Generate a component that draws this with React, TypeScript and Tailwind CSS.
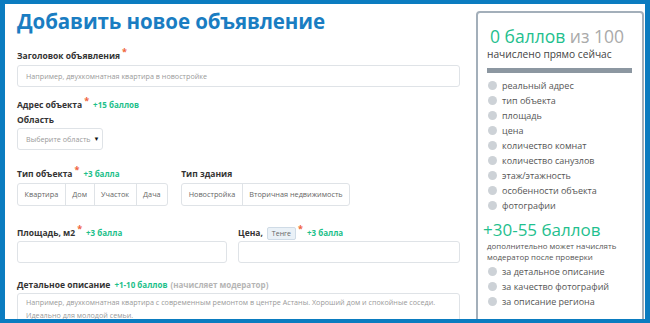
import React from "react";

const FONT = { fontFamily: '"Open Sans", "Noto Sans", sans-serif' };

const Star = () => <span className="text-[#f0643c] text-[9px] leading-none relative -top-[4px] ml-[2px]">*</span>;

const Points = ({ children }: { children: React.ReactNode }) => (
  <span className="text-[#1dbf8a] text-[8px] font-bold ml-[4px]">{children}</span>
);

const Label = ({ children, className = "" }: { children: React.ReactNode; className?: string }) => (
  <div className={`flex items-baseline text-[8.5px] font-bold text-[#333] leading-[14px] h-[14px] whitespace-nowrap ${className}`}>
    {children}
  </div>
);

const Input = ({ placeholder, className = "" }: { placeholder?: string; className?: string }) => (
  <div className={`h-[22px] border border-[#dfe3e7] rounded-[3px] flex items-center px-[8px] text-[7.2px] text-[#9a9a9a] whitespace-nowrap ${className}`}>
    {placeholder}
  </div>
);

const Group = ({ items }: { items: string[] }) => (
  <div className="flex h-[23px] mt-[2px] border border-[#dfe3e7] rounded-[3px] text-[7.3px] text-[#666] whitespace-nowrap">
    {items.map((t, i) => (
      <div key={t} className={`flex items-center px-[6.5px] ${i > 0 ? "border-l border-[#dfe3e7]" : ""}`}>{t}</div>
    ))}
  </div>
);

const CHECKS = [
  "реальный адрес",
  "тип объекта",
  "площадь",
  "цена",
  "количество комнат",
  "количество санузлов",
  "этаж/этажность",
  "особенности объекта",
  "фотографии",
];

const EXTRA = ["за детальное описание", "за качество фотографий", "за описание региона"];

const Check = ({ text }: { text: string }) => (
  <li className="flex items-center h-[15px] text-[9px] text-[#555] whitespace-nowrap">
    <span className="w-[9px] h-[9px] rounded-full bg-[#cdd2d7] ml-[1px] mr-[5px] shrink-0" />
    {text}
  </li>
);

export default function App() {
  return (
    <div
      style={FONT}
      className="w-[650px] h-[323px] overflow-hidden bg-white border-[#0b7cc0] border-l-[5px] border-r-[5px] border-t-[4px] border-b-[4px] flex"
    >
      {/* Form */}
      <div className="w-[455px] pl-[12px] shrink-0">
        <h1 className="text-[20.5px] font-bold text-[#1a7dc2] leading-[28px] mt-[3px] whitespace-nowrap tracking-[-0.1px]">
          Добавить новое объявление
        </h1>

        <Label className="mt-[14px]">Заголовок объявления<Star /></Label>
        <Input className="mt-[2px] w-[443px]" placeholder="Например, двухкомнатная квартира в новостройке" />

        <Label className="mt-[11px]">Адрес объекта<Star /><Points>+15 баллов</Points></Label>
        <Label className="mt-[1px]">Область</Label>
        <div className="mt-[1px] w-[86px] h-[22px] border border-[#dfe3e7] rounded-[3px] flex items-center pl-[8px] text-[7.2px] text-[#9a9a9a] whitespace-nowrap">
          Выберите область
          <span className="ml-[3px] text-[#111] text-[6px]">▼</span>
        </div>

        <div className="mt-[17px] flex gap-[13px]">
          <div>
            <Label>Тип объекта<Star /><Points>+3 балла</Points></Label>
            <Group items={["Квартира", "Дом", "Участок", "Дача"]} />
          </div>
          <div>
            <Label>Тип здания</Label>
            <Group items={["Новостройка", "Вторичная недвижимость"]} />
          </div>
        </div>

        <div className="mt-[20px] flex gap-[11px] w-[443px]">
          <div className="w-[210px]">
            <Label>Площадь, м2<Star /><Points>+3 балла</Points></Label>
            <Input className="mt-[1px]" />
          </div>
          <div className="flex-1">
            <Label>
              Цена,
              <span className="ml-[4px] px-[4px] h-[13px] leading-[12px] border border-[#cfdbe6] bg-[#eaf1f7] rounded-[2px] text-[7px] font-normal text-[#666] self-center">
                Тенге
              </span>
              <Star />
              <Points>+3 балла</Points>
            </Label>
            <Input className="mt-[1px]" />
          </div>
        </div>

        <Label className="mt-[15px]">
          Детальное описание<Points>+1-10 баллов</Points>
          <span className="text-[#b5b5b5] text-[8px] font-bold ml-[3px]">(начисляет модератор)</span>
        </Label>
        <div className="mt-[1px] w-[443px] h-[40px] border border-[#dfe3e7] rounded-[3px] px-[8px] pt-[2px] text-[7.2px] leading-[13px] text-[#9a9a9a]">
          Например, двухкомнатная квартира с современным ремонтом в центре Астаны. Хороший дом и спокойные соседи.
          <br />
          Идеально для молодой семьи.
        </div>
      </div>

      {/* Score panel */}
      <div className="ml-[16px] mt-[7px] w-[168px] h-[340px] border-2 border-[#a3afba] rounded-[4px] pl-[9px] pr-[10px] shrink-0">
        <div className="mt-[11px] ml-[3px] text-[17.5px] leading-[24px] whitespace-nowrap">
          <span className="text-[#1fc08e]">0 баллов</span> <span className="text-[#aaa]">из 100</span>
        </div>
        <div className="text-[10.2px] text-[#444] leading-[14px] -mt-[1px] whitespace-nowrap">начислено прямо сейчас</div>
        <div className="h-[5px] bg-[#8c97a1] mt-[7px]" />
        <ul className="mt-[5px]">
          {CHECKS.map((c) => <Check key={c} text={c} />)}
        </ul>
        <div className="text-[17px] text-[#1fc08e] leading-[22px] mt-[6px] -ml-[4px] whitespace-nowrap">+30-55 баллов</div>
        <div className="text-[7.9px] text-[#555] leading-[11px] whitespace-nowrap">
          дополнительно может начислять
          <br />
          модератор после проверки
        </div>
        <ul className="mt-[1px]">
          {EXTRA.map((c) => <Check key={c} text={c} />)}
        </ul>
      </div>
    </div>
  );
}
